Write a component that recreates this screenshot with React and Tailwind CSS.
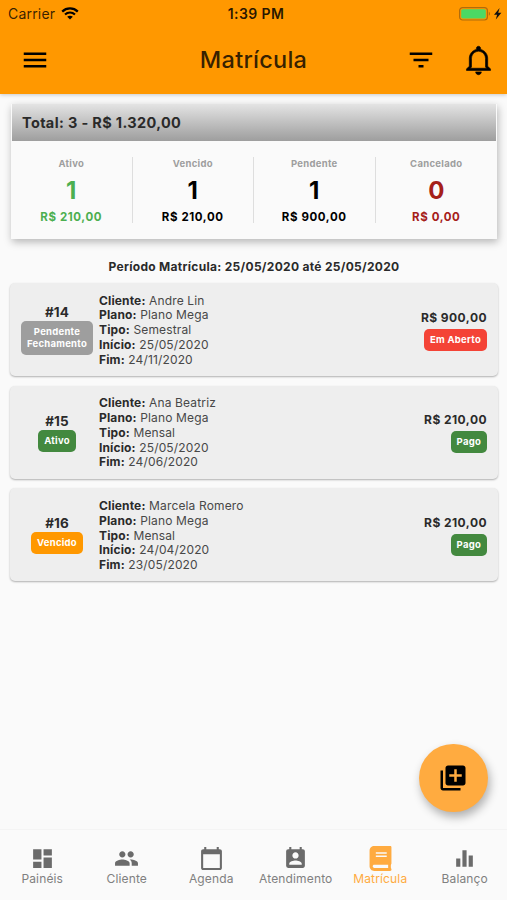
import React, { useState } from "react";
import {
  MdMenu,
  MdFilterList,
  MdDashboard,
  MdPeople,
  MdCalendarToday,
  MdPermContactCalendar,
  MdEqualizer,
  MdLibraryAdd,
} from "react-icons/md";
import { IoMdNotificationsOutline } from "react-icons/io";
import { FaBook } from "react-icons/fa";

const totals = [
  { label: "Ativo", count: 1, value: "R$ 210,00", color: "text-[#4caf50]" },
  { label: "Vencido", count: 1, value: "R$ 210,00", color: "text-black" },
  { label: "Pendente", count: 1, value: "R$ 900,00", color: "text-black" },
  { label: "Cancelado", count: 0, value: "R$ 0,00", color: "text-[#a5201a]" },
];

const enrollments = [
  {
    id: 14,
    status: ["Pendente", "Fechamento"],
    statusColor: "bg-[#9e9e9e]",
    client: "Andre Lin",
    plan: "Plano Mega",
    type: "Semestral",
    start: "25/05/2020",
    end: "24/11/2020",
    price: "R$ 900,00",
    payment: "Em Aberto",
    paymentColor: "bg-[#f44336]",
  },
  {
    id: 15,
    status: ["Ativo"],
    statusColor: "bg-[#43893f]",
    client: "Ana Beatriz",
    plan: "Plano Mega",
    type: "Mensal",
    start: "25/05/2020",
    end: "24/06/2020",
    price: "R$ 210,00",
    payment: "Pago",
    paymentColor: "bg-[#43893f]",
  },
  {
    id: 16,
    status: ["Vencido"],
    statusColor: "bg-[#ff9800]",
    client: "Marcela Romero",
    plan: "Plano Mega",
    type: "Mensal",
    start: "24/04/2020",
    end: "23/05/2020",
    price: "R$ 210,00",
    payment: "Pago",
    paymentColor: "bg-[#43893f]",
  },
];

const tabs = [
  { label: "Painéis", icon: MdDashboard },
  { label: "Cliente", icon: MdPeople },
  { label: "Agenda", icon: MdCalendarToday },
  { label: "Atendimento", icon: MdPermContactCalendar },
  { label: "Matrícula", icon: FaBook },
  { label: "Balanço", icon: MdEqualizer },
];

const StatusBar = () => (
  <div className="grid grid-cols-3 items-center h-[27px] pl-[5px] pr-1 text-black">
    <div className="flex items-center gap-1.5 pl-[3px]">
      <span className="text-[14px] tracking-[0.2px] text-black/80">
        Carrier
      </span>
      <svg width="18" height="13" viewBox="0 0 18 13" fill="none">
        <path
          d="M1.2 4.6C5.6.4 12.4.4 16.8 4.6"
          stroke="currentColor"
          strokeWidth="2.3"
        />
        <path
          d="M4 7.5c2.9-2.6 7.1-2.6 10 0"
          stroke="currentColor"
          strokeWidth="2.2"
        />
        <path d="M9 12.6 6.2 9.8c1.6-1.5 4-1.5 5.6 0z" fill="currentColor" />
      </svg>
    </div>
    <span className="pl-[4px] text-center text-[14px] font-semibold tracking-[0.4px] text-black/85">
      1:39 PM
    </span>
    <div className="flex items-center justify-end">
      <svg width="44" height="14" viewBox="0 0 44 14">
        <rect
          x="0.6"
          y="0.6"
          width="27.8"
          height="12.4"
          rx="3"
          fill="none"
          stroke="#b06c0c"
          strokeWidth="1.2"
        />
        <rect x="2.2" y="2.2" width="24.6" height="9.2" rx="1.6" fill="#4cd964" />
        <path d="M29.8 4.8c1.6.6 1.6 3.4 0 4z" fill="#b06c0c" />
        <path d="M40.6 1 35 7.8h3.1L36.8 12.6 42.4 5.8h-3.2z" fill="#111" />
      </svg>
    </div>
  </div>
);

const Badge = ({ color, children }) => (
  <span
    className={`${color} rounded-[5px] px-1.5 py-[5px] text-center text-[9.5px] leading-[12px] font-bold tracking-[0.25px] text-white`}
  >
    {children}
  </span>
);

const Field = ({ label, value }) => (
  <p>
    <span className="font-bold text-[#2a2a2a]">{label}:</span> {value}
  </p>
);

const EnrollmentCard = ({ item }) => (
  <div className="flex items-center h-[93px] rounded-[5px] bg-[#eeeeee] pl-[10px] pr-[11px] shadow-[0_1px_2px_rgba(0,0,0,0.3)]">
    <div className="flex w-[74px] shrink-0 flex-col items-center">
      <span className="text-[13.5px] leading-[17px] font-bold tracking-[0.1px] text-[#2a2a2a]">
        #{item.id}
      </span>
      <Badge color={item.statusColor}>
        {item.status.map((line) => (
          <span key={line} className="block">
            {line}
          </span>
        ))}
      </Badge>
    </div>
    <div className="ml-[5px] grow pt-[2px] text-[12px] leading-[14.7px] tracking-[0.14px] text-[#484848]">
      <Field label="Cliente" value={item.client} />
      <Field label="Plano" value={item.plan} />
      <Field label="Tipo" value={item.type} />
      <Field label="Início" value={item.start} />
      <Field label="Fim" value={item.end} />
    </div>
    <div className="flex flex-col items-end gap-[3px]">
      <span className="text-[12px] leading-[17px] font-bold tracking-[0.45px] text-[#2a2a2a]">
        {item.price}
      </span>
      <Badge color={item.paymentColor}>{item.payment}</Badge>
    </div>
  </div>
);

const App = () => {
  const [active, setActive] = useState("Matrícula");

  return (
    <div className="relative flex h-[900px] w-[507px] flex-col overflow-hidden bg-[#fafafa] font-['Inter','Liberation_Sans',sans-serif]">
      <header className="z-10 h-[94px] shrink-0 bg-[#ff9800] shadow-[0_1px_4px_rgba(0,0,0,0.2)]">
        <StatusBar />
        <div className="grid grid-cols-[1fr_auto_1fr] items-center h-[66px] px-[11px]">
          <button className="justify-self-start pl-[9px]">
            <MdMenu size={30} />
          </button>
          <h1 className="text-[23.5px] font-medium tracking-[0.25px] text-black/80">
            Matrícula
          </h1>
          <div className="flex items-center justify-end gap-[25px]">
            <MdFilterList size={30} />
            <IoMdNotificationsOutline
              size={35}
              stroke="currentColor"
              strokeWidth={9}
            />
          </div>
        </div>
      </header>

      <main className="grow pl-[10px] pr-[9px] pt-[10px]">
        {/* Totals */}
        <section className="ml-px mr-px h-[135px] bg-[#fafafa] shadow-[1px_3px_8px_rgba(0,0,0,0.28)]">
          <div className="mx-px flex h-[37px] items-center bg-linear-to-b from-[#e4e4e4] to-[#9e9e9e] px-[10px]">
            <h2 className="text-[14.5px] font-bold tracking-[0.35px] text-[#2a2a2a]">
              Total: 3 - R$ 1.320,00
            </h2>
          </div>
          <div className="grid grid-cols-4 divide-x divide-[#dedede] pt-[16px]">
            {totals.map((t) => (
              <div
                key={t.label}
                className="flex h-[66px] flex-col items-center font-bold"
              >
                <span className="text-[9.5px] leading-[14px] tracking-[0.3px] text-[#9e9e9e]">
                  {t.label}
                </span>
                <span className={`${t.color} mt-[5px] text-[24px] leading-[30px]`}>
                  {t.count}
                </span>
                <span
                  className={`${t.color} mt-[4px] text-[11.5px] leading-[15px] tracking-[0.6px]`}
                >
                  {t.value}
                </span>
              </div>
            ))}
          </div>
        </section>

        <p className="mt-[19px] mb-[8px] text-center text-[12px] leading-[17px] font-bold tracking-[0.3px] text-[#2a2a2a]">
          Período Matrícula: 25/05/2020 até 25/05/2020
        </p>

        <div className="flex flex-col gap-[9.7px]">
          {enrollments.map((item) => (
            <EnrollmentCard key={item.id} item={item} />
          ))}
        </div>
      </main>

      <button className="absolute right-[19.5px] bottom-[88px] flex h-[68.5px] w-[68.5px] items-center justify-center rounded-full bg-[#ffab40] shadow-[2px_5px_10px_rgba(0,0,0,0.3)]">
        <MdLibraryAdd size={30} />
      </button>

      <nav className="grid h-[71px] shrink-0 grid-cols-6 border-t border-[#f4f4f4]">
        {tabs.map(({ label, icon: Icon }) => (
          <button
            key={label}
            onClick={() => setActive(label)}
            className={`flex flex-col items-center pt-4 text-[12px] leading-[16px] tracking-[0.15px] ${
              active === label ? "text-[#ffab40]" : "text-[#808080]"
            }`}
          >
            <Icon
              size={25}
              className={active === label ? "" : "text-[#6b6b6b]"}
            />
            {label}
          </button>
        ))}
      </nav>
    </div>
  );
};

export default App;
